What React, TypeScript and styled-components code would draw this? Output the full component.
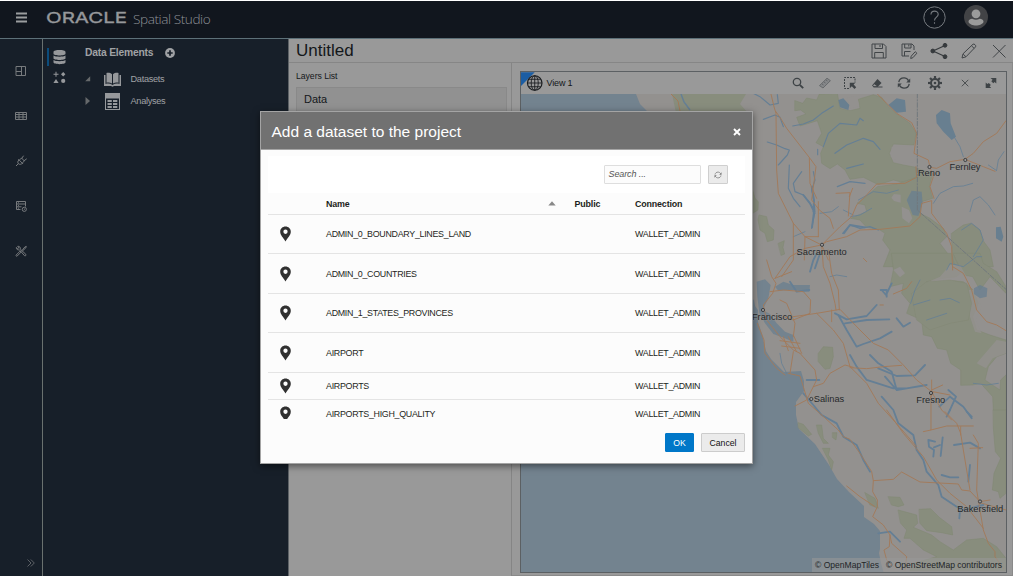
import React from "react";
import styled, { createGlobalStyle } from "styled-components";

const Global = createGlobalStyle`
  html, body { margin: 0; padding: 0; background: #fff; overflow: hidden; }
  * { box-sizing: border-box; }
  body { font-family: "Liberation Sans", Arial, sans-serif; color: #14171a; }
`;

const Page = styled.div`
  position: relative;
  width: 1014px;
  height: 576px;
  border-top: 1px solid #fff;
  border-right: 1px solid #fff;
  display: flex;
  flex-direction: column;
  overflow: hidden;
`;

const TopBar = styled.header`
  height: 38px;
  flex: none;
  display: flex;
  align-items: center;
  background: #11161e;
  border-bottom: 1px solid #5d7078;
  padding: 0 25px 5px 15px;
`;
const Brand = styled.div`
  display: flex;
  align-items: center;
  margin-left: 17px;
  flex: 1;
`;
const Product = styled.span`
  font: 300 13.6px/18px "Open Sans", sans-serif;
  letter-spacing: -0.43px;
  color: #8e9297;
  margin: 4px 0 0 5px;
  white-space: nowrap;
`;
const TopActions = styled.div`
  display: flex;
  align-items: center;
  gap: 18px;
`;

const Body = styled.div`
  display: flex;
  flex: 1;
  min-height: 0;
`;
const Rail = styled.nav`
  width: 43px;
  background: #171f29;
  border-right: 1px solid #6a716f;
  display: flex;
  flex-direction: column;
  align-items: center;
  padding: 25px 0 6px;
`;
const RailItem = styled.div<{ $last?: boolean }>`
  width: 14px;
  height: 14px;
  margin: ${(p) => (p.$last ? "auto 0 0 23px" : "0 0 31px 0")};
  display: flex;
`;
const Explorer = styled.aside`
  width: 246px;
  background: #171f29;
  border-right: 1px solid #5d6266;
  display: flex;
`;
const TabStrip = styled.div`
  width: 31px;
  padding: 9px 0 0 4px;
  display: flex;
  flex-direction: column;
  gap: 2px;
`;
const TabIcon = styled.div<{ $active?: boolean }>`
  height: 18px;
  border-left: 2px solid ${(p) => (p.$active ? "#0b4c7c" : "transparent")};
  padding-left: 4px;
  display: flex;
  align-items: center;
`;
const Tree = styled.div`
  padding: 6px 0 0 11px;
  color: #a0a2a5;
`;
const TreeTitle = styled.div`
  display: flex;
  align-items: center;
  gap: 12px;
  height: 15px;
  font-size: 10.3px;
  font-weight: bold;
  letter-spacing: -0.2px;
  margin-bottom: 8px;
`;
const TreeRow = styled.div`
  display: flex;
  align-items: center;
  height: 22px;
  font-size: 9.2px;
  letter-spacing: -0.3px;
`;
const Caret = styled.div`
  width: 19px;
  display: flex;
`;
const TreeIcon = styled.div`
  width: 26.5px;
  display: flex;
`;

const Main = styled.main`
  flex: 1;
  min-width: 0;
  background: #999;
  display: flex;
  flex-direction: column;
`;
const TitleBar = styled.div`
  height: 24px;
  flex: none;
  display: flex;
  align-items: center;
  border-bottom: 1px solid #868686;
  padding-left: 7px;
`;
const Title = styled.h1`
  flex: 1;
  margin: 0;
  font-size: 17px;
  font-weight: normal;
`;
const TitleAction = styled.div`
  width: 30px;
  height: 20px;
  display: flex;
  align-items: center;
  justify-content: center;
  &:last-child { width: 29px; }
`;
const Workspace = styled.div`
  flex: 1;
  display: flex;
  min-height: 0;
`;
const Layers = styled.section`
  width: 223px;
  flex: none;
  border-right: 1px solid #858585;
  padding: 7px 4px 0 7px;
`;
const LayersTitle = styled.div`
  font-size: 8.7px;
  letter-spacing: -0.05px;
  line-height: 12px;
`;
const LayerGroup = styled.div`
  margin-top: 5px;
  height: 32px;
  background: #919191;
  border: 1px solid #898989;
  font-size: 11px;
  line-height: 22px;
  padding-left: 7px;
`;
const ViewArea = styled.section`
  flex: 1;
  padding: 8px 5px 2px 8px;
  border-right: 1px solid #8a8a8a;
  border-bottom: 1px solid #8a8a8a;
  display: flex;
`;
const ViewFrame = styled.div`
  flex: 1;
  border: 1px solid #5c6063;
  display: flex;
  flex-direction: column;
`;
const ViewHeader = styled.div`
  height: 22px;
  flex: none;
  display: flex;
  align-items: center;
  padding-right: 8px;
`;
const ViewMark = styled.div`
  width: 25.5px;
  height: 22px;
  display: flex;
`;
const ViewName = styled.div`
  flex: 1;
  font-size: 9px;
  letter-spacing: -0.15px;
`;
const ToolCell = styled.div<{ $gap: number }>`
  width: 14px;
  height: 16px;
  margin-left: ${(p) => p.$gap}px;
  display: flex;
  align-items: center;
  justify-content: center;
`;
const MapBox = styled.div`
  flex: 1;
  min-height: 0;
  display: flex;
  position: relative;
  overflow: hidden;
`;
const Attribution = styled.div`
  position: absolute;
  right: 0;
  bottom: 0;
  height: 14px;
  padding: 0 4px 0 3px;
  display: flex;
  align-items: center;
  gap: 7px;
  background: rgba(153, 153, 153, 0.55);
  font-size: 8.55px;
  color: #222527;
  white-space: nowrap;
`;

const Dialog = styled.div`
  position: absolute;
  left: 260px;
  top: 110px;
  width: 493px;
  height: 353px;
  background: #fcfcfc;
  border: 1px solid #a4a4a4;
  box-shadow: 0 2px 7px rgba(0, 0, 0, 0.5);
  display: flex;
  flex-direction: column;
`;
const DialogHeader = styled.div`
  height: 38px;
  flex: none;
  display: flex;
  align-items: center;
  justify-content: space-between;
  background: #717171;
  border-bottom: 1px solid #a5a5a5;
  color: #fff;
  font-size: 15.5px;
  padding: 2px 11px 0 10.5px;
`;
const DialogBody = styled.div`
  flex: 1;
  padding: 6px 7px 0;
  min-height: 0;
`;
const Filter = styled.div`
  height: 37px;
  background: #fff;
  display: flex;
  justify-content: flex-end;
  align-items: center;
  gap: 7px;
  padding-right: 17.5px;
`;
const Search = styled.div`
  width: 97px;
  height: 19px;
  border: 1px solid #dedede;
  border-radius: 1px;
  background: #fcfcfc;
  color: #555;
  font-size: 9px;
  letter-spacing: -0.1px;
  font-style: italic;
  line-height: 17px;
  padding-left: 4px;
`;
const RefreshButton = styled.div`
  width: 20px;
  height: 19px;
  border: 1px solid #cfcfcf;
  border-radius: 1px;
  background: #ebebeb;
  display: flex;
  align-items: center;
  justify-content: center;
`;
const Row = styled.div<{ $h: number; $head?: boolean; $last?: boolean }>`
  height: ${(p) => p.$h}px;
  display: grid;
  grid-template-columns: 58px 248.5px 60.5px 1fr;
  align-items: center;
  border-bottom: ${(p) => (p.$last ? "0" : "1px solid #e4e4e4")};
  font-size: 8.9px;
  letter-spacing: ${(p) => (p.$head ? -0.15 : -0.29)}px;
  font-weight: ${(p) => (p.$head ? "bold" : "normal")};
  color: #1d1f21;
  overflow: hidden;
`;
const PinCell = styled.div<{ $cut?: boolean }>`
  padding-left: 11.500px;
  display: flex;
  height: ${(p) => (p.$cut ? 13 : 16)}px;
  margin-bottom: ${(p) => (p.$cut ? 2 : 0)}px;
  overflow: hidden;
`;
const NameHead = styled.div`
  display: flex;
  align-items: center;
  justify-content: space-between;
  padding-right: 19px;
`;
const Footer = styled.div`
  height: 39px;
  flex: none;
  display: flex;
  justify-content: flex-end;
  gap: 7px;
  padding: 9px 7px 0;
`;
const Button = styled.button<{ $primary?: boolean }>`
  height: 19px;
  width: ${(p) => (p.$primary ? 29 : 44)}px;
  padding: 0;
  border: 1px solid ${(p) => (p.$primary ? "#0077c8" : "#cccccc")};
  border-radius: 1px;
  background: ${(p) => (p.$primary ? "#0077c8" : "#ebebeb")};
  color: ${(p) => (p.$primary ? "#fff" : "#111")};
  font: 8.7px "Liberation Sans", Arial, sans-serif;
`;

const line = "#777a7d";

const Pin = () => (
  <svg width="11" height="16" viewBox="0 0 11 16">
    <path fillRule="evenodd" fill="#303030" d="M5.5.6C2.6.6.2 2.8.2 5.8c0 3.4 3 5.800 5.300 9.600 2.300-3.800 5.300-6.200 5.300-9.600C10.800 2.800 8.400.6 5.500.6Zm0 3a2.150 2.150 0 1 1 0 4.300 2.150 2.150 0 0 1 0-4.300Z" />
  </svg>
);

const Globe = () => (
  <svg width="26" height="22" viewBox="0 0 26 22">
    <path d="M0 0h14L0 14Z" fill="#1b5da3" />
    <g fill="none" stroke="#1a1d20" strokeWidth=".9">
      <circle cx="14" cy="11" r="7.400" fill="#999" strokeWidth="1.200" />
      <ellipse cx="14" cy="11" rx="3.600" ry="7.400" />
      <path d="M14 3.600v14.800M6.600 11h14.800M7.800 7.200h12.400M7.800 14.800h12.400" />
    </g>
  </svg>
);

const RefreshIcon = ({ size, color }: { size: number; color: string }) => (
  <svg width={size} height={size} viewBox="0 0 14 14" fill="none" stroke={color} strokeWidth="1.300">
    <path d="M1.800 6.200C2.200 3.500 4.400 1.900 7 1.900c2 0 3.600 1 4.500 2.700M12.200 7.800c-.4 2.700-2.600 4.300-5.200 4.300-2 0-3.600-1-4.500-2.700" />
    <path fill={color} stroke="none" d="M13.200 2.400v4H9.200ZM.8 11.600v-4h4Z" />
  </svg>
);

const gearTeeth = Array.from({ length: 8 }, (_, i) => i * 45);

const rail = [
  <svg width="14" height="14" viewBox="0 0 14 14" fill="none" stroke={line}>
    <path d="M2 2.500h9.500v9H2ZM7.500 2.500v9M2 7.500h5.500" />
  </svg>,
  <svg width="14" height="14" viewBox="0 0 14 14" fill="none" stroke={line}>
    <path d="M1.500 3.500h11v7h-11ZM1.500 5.500h11M1.500 8h11M5 3.500v7M9 3.500v7" />
  </svg>,
  <svg width="14" height="14" viewBox="0 0 14 14" fill="none" stroke={line}>
    <path d="M2 12l2.500-2.500M4.300 5.200l4.800 4.800M5 6c-1.500 1.300-1.500 2.800-.6 3.700s2.500.9 4-.4M5.500 6 7.200 4.200c1 .2 2.600 1.700 2.900 2.900L8.500 8.900M7.600 4.500l2-2.800M10 6.800l2.700-2" />
  </svg>,
  <svg width="14" height="14" viewBox="0 0 14 14" fill="none" stroke={line}>
    <path d="M6.500 10.500h-4v-8h9v5M2.500 5h9M2.500 7.800h5M4 3.800h1M4 6.400h1M4 9.200h1" />
    <circle cx="10.300" cy="10.300" r="2.100" />
    <path d="M10.300 9.300v1.200h.8" strokeWidth=".7" />
  </svg>,
  <svg width="14" height="14" viewBox="0 0 14 14" fill="none" stroke={line}>
    <path d="M2.200 11l4-4 1 1-4 4c-.8.600-1.700-.300-1-1ZM8 6.500l2.800-3.500 1.500-.6-.5 1.500L8.400 7M2.300 3.500c0 2 1.500 2.800 3 2.200l5.200 6c.8.600 2-.400 1.300-1.400L6.200 5c.5-1.500-.7-3-2.500-2.700l1 1.500-1 1Z" />
  </svg>,
];

const tools: { gap: number; icon: React.ReactNode }[] = [
  {
    gap: 0,
    icon: (
      <svg width="14" height="14" viewBox="0 0 14 14" fill="none" stroke="#3e4346">
        <circle cx="6" cy="6" r="3.700" strokeWidth="1.300" />
        <path d="M8.800 8.800l3.400 3.400" strokeWidth="1.900" />
      </svg>
    ),
  },
  {
    gap: 13,
    icon: (
      <svg width="14" height="14" viewBox="0 0 14 14" fill="#858789" stroke="#5c6062" strokeWidth=".8">
        <path d="M1.500 9.600 9 2.200l3.400 2.500L5 12Z" />
        <path d="M4 8l1.500 1M6 6l1.500 1M8 4l1.500 1" />
      </svg>
    ),
  },
  {
    gap: 11,
    icon: (
      <svg width="14" height="14" viewBox="0 0 14 14" fill="none" stroke="#3e4346">
        <path d="M6 12.500H1.500v-11h10.500v5" strokeDasharray="2 1" />
        <path fill="#3e4346" stroke="none" d="M6.800 6.800h5.500l-1.700 1.700 2.600 2.700-1.700 1.700L8.800 10.300l-2 2Z" />
      </svg>
    ),
  },
  {
    gap: 13,
    icon: (
      <svg width="14" height="14" viewBox="0 0 14 14" fill="#3e4346">
        <path d="M7.500 3l4 4-4 4H3.500L2 9.500Z" />
        <path d="M4.400 8.300 7 10.200H4L3 9.300Z" fill="#999" />
        <path d="M3.500 10.500h9v1h-9Z" />
      </svg>
    ),
  },
  { gap: 13, icon: <RefreshIcon size={14} color="#3e4346" /> },
  {
    gap: 17,
    icon: (
      <svg width="14" height="14" viewBox="0 0 14 14" fill="none" stroke="#3e4346">
        <circle cx="7" cy="7" r="4" strokeWidth="2" />
        <circle cx="7" cy="7" r="1.300" fill="#3e4346" stroke="none" />
        {gearTeeth.map((a) => (
          <path key={a} d="M7 0v2.800" strokeWidth="2.200" transform={`rotate(${a} 7 7)`} />
        ))}
      </svg>
    ),
  },
  {
    gap: 16,
    icon: (
      <svg width="14" height="14" viewBox="0 0 14 14" stroke="#4a4e50">
        <path d="M3.800 3.800l6.500 6.500M10.300 3.800l-6.500 6.500" />
      </svg>
    ),
  },
  {
    gap: 12,
    icon: (
      <svg width="14" height="14" viewBox="0 0 14 14" fill="#3e4346">
        <path d="M6.500 2h5.800v5.500L10.600 5.900 9.300 7.200 7.300 5.300l1.300-1.500ZM1.700 6.500l1.700 1.600L4.800 6.900 6.900 8.900 5.600 10.300 7.200 12H1.700Z" />
      </svg>
    ),
  },
];

const titleIcons = [
  <svg width="18" height="18" viewBox="0 0 18 18" fill="none" stroke="#414548" strokeWidth="1">
    <path d="M2 2h11.500L16 4.500V16H2ZM5 2v4.500h7.500V2M10 3v2M4.700 16v-5.500h8.600V16" />
  </svg>,
  <svg width="18" height="18" viewBox="0 0 18 18" fill="none" stroke="#414548" strokeWidth="1">
    <path d="M9 14H2V2h10l2 2v4M4.700 2v4h6.300V2M8.800 2.500v2M4.500 14V9.500h6M10.700 16.500l.5-2.300 4-4.500 1.700 1.500-4 4.500Z" />
  </svg>,
  <svg width="18" height="18" viewBox="0 0 18 18" fill="#363a3d" stroke="#363a3d">
    <path d="M15 3.500 3 9l12 5.500" fill="none" strokeWidth="1.200" />
    <circle cx="15" cy="3.300" r="1.900" />
    <circle cx="2.800" cy="9" r="1.900" />
    <circle cx="15" cy="14.700" r="1.900" />
  </svg>,
  <svg width="18" height="18" viewBox="0 0 18 18" fill="none" stroke="#414548" strokeWidth="1">
    <path d="M2 16l1-4.200L13 2.200c1-.8 3.500 1.200 2.600 2.600L6 14.800ZM11.500 3.800l2.700 2.600M3.200 12.200l2.700 2.500" />
  </svg>,
  <svg width="18" height="18" viewBox="0 0 18 18" stroke="#414548" strokeWidth="1">
    <path d="M3 3l12.500 12.500M15.500 3 3 15.500" />
  </svg>,
];

const cities = [
  { name: "Reno", x: 929, y: 176, cx: 929.5, cy: 167 },
  { name: "Fernley", x: 965, y: 169.500, cx: 965.3, cy: 160 },
  { name: "Sacramento", x: 821.600, y: 254.500, cx: 822, cy: 244.800 },
  { name: "San Francisco", x: 762.500, y: 319.500, cx: 763, cy: 310 },
  { name: "Salinas", x: 829, y: 402, cx: 811.300, cy: 399 },
  { name: "Fresno", x: 930.800, y: 403, cx: 931, cy: 393 },
  { name: "Bakersfield", x: 980.300, y: 511.500, cx: 980, cy: 501.500 },
];

const TerrainMap = () => (
  <svg width="485" height="478" viewBox="521 94 485 478">
    <rect x="521" y="94" width="485" height="478" fill="#93918f" />
    <path fill="#73838f" d="M521 94H636l4 10 9 9 20 60 60 110 25 17 4 22 4 12 4 17 5 8 13 13 17-1 3 10v10l-8 11v13l3 14 16 15 14 21 8 14 12 13 15 14v11l10 7 6 7v18l-1 4 2 10 5 18H521Z" />
    <path fill="#888d7d" d="M672 94h74l-6 10 8 9h-72Z" />
    <g transform="translate(750 90) scale(.33333)" strokeLinejoin="round" strokeLinecap="round">
      <g fill="#888d7d" stroke="#7f8771" strokeWidth="1.500">
        <path d="M135 32 158 40 170 24 200 30 208 12 262 10 270 55 300 62 330 55 325 28 370 14 395 22 415 50 440 72 480 100 498 128 492 165 430 162 418 190 430 218 460 225 498 232 500 258 470 280 430 270 385 284 340 262 300 268 285 240 262 222 240 236 215 220 212 190 220 170 198 158 215 130 202 92 150 108 140 82 168 72 152 60 135 62Z" />
        <path d="M350 318 382 290 440 282 500 262 500 235 548 250 538 290 548 325 515 335 510 370 540 385 580 415 590 440 570 460 600 500 600 530 400 530 420 480 398 450 405 430 390 420 350 412 330 390 302 385 350 365 345 345 322 340Z" />
        <path d="M605 430 640 405 662 400 690 420 698 450 720 480 730 530 608 530Z" />
        <path d="M28 375 50 380 55 405 72 420 70 450 52 455 45 430 30 420 24 390ZM8 300 15 325 25 335 24 360 8 370ZM85 460l18-8-4 20 5 20-10 4Z" />
        <path d="M425 490 605 490 612 520 640 540 620 560 580 565 530 575 540 600 520 630 560 610 590 570 640 575 670 600 685 640 668 680 680 720 720 735 768 750 768 790 740 800 715 830 705 870 735 890 750 900 752 870 768 855 768 980 730 960 728 920 692 880 668 885 632 886 632 840 602 820 590 780 562 775 545 740 520 735 515 690 470 670 480 640 455 610 460 580 420 590 430 540Z" />
        <path d="M205 790 220 770 248 772 250 800 240 835 225 838 205 815Z" />
        <path d="M610 490 690 490 700 520 740 545 768 590 768 610 720 560 690 600 668 560 640 555Z" />
        <path d="M730 960h38v250l-18 15-5-20-18-5 5-50 20-45-16-20-6-70Z" />
        <path d="M508 1258 542 1256 568 1282 605 1310 608 1335 575 1328 530 1322 510 1300Z" />
        <path d="M415 1220 450 1222 462 1245 445 1250 425 1245ZM345 1208 375 1225 385 1255 360 1245ZM445 1260 500 1275 503 1300 490 1312 545 1335 570 1355 610 1380 650 1350 700 1345 740 1370 768 1405 768 1442 480 1442 490 1420 560 1400 520 1380 480 1345 462 1345 470 1320 452 1300Z" />
        <path d="M145 998l15 5 25 30-10 5-30-25ZM200 1005l15 0 5 40 15 15-15 0-15-30ZM218 1075h22l-5 20 15 20-5 25-10-30ZM248 1028h13l-3 22-10-7Z" />
      </g>
      <g fill="#93918f">
        <path d="M432 312l20 2 0 24-20-5-8-10ZM455 350l22 10 10 25-10 15-20-15ZM425 170h60l10 45-45 5-28-20ZM290 25l30-8 8 30-24 10ZM430 540l20-10 15 20-15 12Z" />
        <path opacity=".8" d="M535 575l35-15 30-35 30 0 25 45 -40 0-40 10-30 20ZM655 600l20 0 20 50-18 40 18 40-20-5-15-45ZM680 820l60-70 28 5v35l-40 15-20 30Z" />
      </g>
      <path fill="#888d7d" stroke="#7f8771" d="M485 610 530 575 600 570 650 580 665 640 655 690 600 700 540 720 500 690Z" />
      <g fill="#687f90">
        <path d="M558 75 575 60 600 70 602 100 618 140 605 150 580 125 560 100ZM415 45 440 25 465 30 468 65 440 68ZM265 30 280 25 298 45 295 60 270 52ZM738 412 752 410 760 440 755 455 738 445Z" />
        <path opacity=".75" d="M470 330 485 302 515 305 518 340 505 378 488 375ZM672 595 690 585 712 595 710 620 690 625 672 612Z" />
        <path fill="#73838f" d="M20 575 45 568 62 585 55 625 38 660 60 672 80 700 105 725 130 735 130 755 105 745 70 732 45 700 28 668 22 620ZM75 590 100 575 130 585 180 585 178 605 120 600 85 602ZM8 640 24 660 24 700 8 710Z" />
      </g>
      <g fill="none" stroke="#657f95" strokeWidth="3.500">
        <path d="M10 10 30 20 60 45 85 40 82 14M40 88 75 75 90 82 100 110M52 156 80 165 105 176 118 180 112 195 85 225M128 108 160 102 190 90 215 70 250 48M220 170 235 130 270 100 320 105 330 85 340 92M255 190 290 165 340 145 370 155 390 178M290 235 340 222M203 178v16M185 415l10-50-15-25-20-25-25-10-5-25 25-35M190 245l5 25-10 30 8 40 2 30M118 225l-3 70 15 30 20 25M262 290 300 275 345 280M278 430 300 405 330 415 360 410 385 420" />
        <path strokeWidth="5.500" d="M186 412 192 365 180 340 160 315M185 290 192 330 190 365M282 430 300 405 345 412" />
        <path strokeWidth="5.500" d="M180 545 190 510 200 490M195 535 210 490M120 575 140 605 178 600M395 600 408 615 425 580M392 600h18v20M255 670 290 688 350 678 380 645M285 700 350 690 418 688M265 675 290 720 320 770 340 762 390 745 425 725M440 685 460 710 480 698M360 795 385 820 425 845 440 900M300 795 320 830 350 870 430 895 470 895 530 885M385 835 440 858 495 856 525 825M405 860 440 900 470 895M170 870h38M568 950 600 920 640 950 665 985M595 900 618 920 600 960" />
        <path d="M90 790 95 820 110 850M482 640 495 600 510 570M490 645 540 630M570 630 600 625 628 638M530 690 590 670M302 380 330 375 365 355M325 330 370 305 410 310 445 300M550 340 570 310 610 290 640 288 668 280M612 140 630 170 640 200M660 365 670 330 690 320 715 345 735 375M635 420 665 400 690 420 700 450 670 500M762 185 745 210 740 240M715 225 740 242M210 370 245 365 265 350M280 360 310 375M130 440 165 425M240 560 260 555 290 560M670 880 710 885 745 880M590 540 600 520 640 530 680 500 695 500" strokeWidth="2.500" />
        <path strokeWidth="5.500" d="M160 910 190 945 215 975 260 1000 280 1040 320 1065 340 1110 360 1145M395 920 430 960 445 1000 490 1035 500 1080 520 1110 530 1145 565 1185 575 1220 620 1250 640 1260 700 1245M535 1050 537 1070 552 1080 550 1100M552 1072 570 1065M578 1042 572 1098M535 1050 555 1055M612 1065 660 1058 690 1075M660 1125 655 1175M575 1155 600 1162 625 1162M630 1260 628 1285M385 1330 420 1325 450 1355M650 965 665 980M590 980 600 960" />
      </g>
      <g fill="none" stroke="#a27a59" strokeWidth="2.800">
        <path d="M62 8 72 50 78 70 80 240 85 310 130 400 165 440 215 465M78 65 95 90 110 115 180 205 198 230 185 330 208 360 240 385 250 415M178 205 180 280 200 325M205 335 205 440M380 10 410 40 440 70 485 98 500 130 492 190 535 210 540 232 560 235 600 215 645 208 670 190 700 155 740 130 768 92M645 208 700 230 735 244M498 230 500 262 465 280 380 282 350 315 320 345 305 380 270 410 240 440 215 465 230 455 290 440 330 420 390 418 480 408 510 380 515 340 545 332 545 370 590 430 605 470 608 540M540 232 550 260 540 290 552 325M258 310 300 308 295 378M298 320 308 295M130 400V510L95 560M165 440 163 510M165 440H205M215 465 220 530 240 580 255 640 258 660M215 465 165 475 120 500 75 565M235 480 245 550 265 600 268 660M215 465 235 510" />
        <path d="M608 530 640 550 665 600 680 660 710 695 740 705 768 722M50 510 65 560 78 580 68 610 40 645 50 690 90 740 130 780 150 790M75 565 125 545M60 605 100 600 160 605 182 630 180 670 130 690 100 680M90 630 110 640 135 700 130 740M130 680 200 670 270 658 330 720 370 760 415 780 460 825 500 870 545 905 575 960 605 990M200 670 250 720 280 760 300 830 350 880 385 940 430 990 500 1070M245 660v35M300 833 350 836 400 830 455 826M310 832 285 825 240 850 220 880 190 890 170 930 135 948M130 785 120 850M150 790 195 840 200 870 190 890M115 850 150 858 160 890 175 940 215 975M22 700 42 750 45 790 80 835 105 855M100 740 115 782M115 740 140 785M130 735 155 790M90 752 150 760M95 768 150 775M545 870V905M545 900 578 885M548 905 600 915M340 505 350 515M430 612 470 595 485 575M390 645H400" />
        <path d="M543 905 543 1020 520 1025M543 1020 590 1008 670 1008M585 965 620 1000 632 1030 640 1080 660 1200M632 1010V1035M670 1035 685 1060 680 1200 700 1320 715 1360 735 1385 735 1400 760 1435M660 1075 698 1073M410 960 460 1030 520 1100 560 1170 600 1210 650 1250 700 1315M215 975 265 1020 280 1040 300 1048 330 1090 365 1145 370 1172 430 1168 455 1146 510 1176 625 1182 635 1200 660 1203 690 1235M370 1172 368 1205 382 1230 382 1250 368 1280 400 1305 420 1335 425 1360 470 1400 465 1440M420 1335 418 1370 402 1380 410 1410 430 1430M290 1188 330 1220 375 1250M690 1235 720 1230M690 1238 768 1260M550 907 540 925" />
      </g>
      <path d="M502 10V360L768 598" fill="none" stroke="#70777c" strokeWidth="3" strokeDasharray="14 5 4 5" />
    </g>
    <path d="M671 94l7 7 2 10" fill="none" stroke="#a27a59" />
    <path d="M681 94l3 8 6 8" fill="none" stroke="#657f95" strokeWidth="1.500" />
    <g fontSize="9.300" textAnchor="middle" fill="#25282a" stroke="#979593" strokeWidth="1" strokeOpacity=".6" paintOrder="stroke">
      {cities.map((c) => (
        <text key={c.name} x={c.x} y={c.y}>
          {c.name}
        </text>
      ))}
    </g>
    <g fill="#999" stroke="#34383b" strokeWidth=".9">
      {cities.map((c) => (
        <circle key={c.name} cx={c.cx} cy={c.cy} r="1.600" />
      ))}
    </g>
  </svg>
);

const datasets = [
  { name: "ADMIN_0_BOUNDARY_LINES_LAND", h: 39 },
  { name: "ADMIN_0_COUNTRIES", h: 40 },
  { name: "ADMIN_1_STATES_PROVINCES", h: 39 },
  { name: "AIRPORT", h: 40 },
  { name: "AIRPORTS", h: 27 },
  { name: "AIRPORTS_HIGH_QUALITY", h: 27 },
];

export default function App() {
  return (
    <Page>
      <Global />
      <TopBar>
        <svg width="13" height="13" viewBox="0 0 13 13" fill="#9b9d9f">
          <path d="M1 1.500h11v2H1ZM1 5.500h11v2H1ZM1 9.500h11v2H1Z" />
        </svg>
        <Brand>
          <svg width="83" height="20" viewBox="0 0 83 20">
            <text x="1" y="15.500" fontFamily="Inter, sans-serif" fontWeight="400" fontSize="14.800" fill="#96989b" stroke="#96989b" strokeWidth=".35" textLength="81" lengthAdjust="spacingAndGlyphs">
              ORACLE
            </text>
          </svg>
          <Product>Spatial Studio</Product>
        </Brand>
        <TopActions>
          <svg width="23" height="23" viewBox="0 0 23 23" fill="none" stroke="#777b80">
            <circle cx="11.500" cy="11.500" r="10.700" />
            <path d="M8 8.500c0-4.500 7.200-4.400 7.200-.2 0 3-3.700 2.700-3.700 6.200M11.500 16.200v1.600" strokeWidth="1.100" />
          </svg>
          <svg width="24" height="24" viewBox="0 0 24 24" fill="#9b9b9b">
            <circle cx="12" cy="12" r="12" fill="#424346" />
            <circle cx="12" cy="8.800" r="4.400" />
            <path d="M4.500 16.500c0-2.300 3.300-3 4.200-2.600 2 1 4.600 1 6.600 0 .900-.400 4.200.300 4.200 2.600 0 2.500-4.500 4-7.500 4s-7.500-1.500-7.500-4Z" />
          </svg>
        </TopActions>
      </TopBar>
      <Body>
        <Rail>
          {rail.map((icon, i) => (
            <RailItem key={i}>{icon}</RailItem>
          ))}
          <RailItem $last>
            <svg width="10" height="14" viewBox="0 0 10 14" fill="none" stroke="#5d6166">
              <path d="M1.500 3.500 5 7l-3.500 3.500M4.800 3.500 8.300 7l-3.500 3.500" />
            </svg>
          </RailItem>
        </Rail>
        <Explorer>
          <TabStrip>
            <TabIcon $active>
              <svg width="13" height="16" viewBox="0 0 13 16" fill="#96989b">
                <path d="M.5 3C.5.400 12.500.400 12.500 3v1.700c0 2.300-12 2.300-12 0ZM.5 6.500c2 1.600 10 1.600 12 0v2.700c0 2.300-12 2.300-12 0ZM.5 11c2 1.600 10 1.600 12 0v2.300c0 2.500-12 2.500-12 0Z" />
              </svg>
            </TabIcon>
            <TabIcon>
              <svg width="13" height="13" viewBox="0 0 13 13" fill="#96989b">
                <path d="M2.500.7h1v2h2v1h-2v2h-1v-2h-2v-1h2ZM10.200 1l2.200 2.200-2.200 2.200L8 3.200ZM3 8l2.600 4H.4Z" />
                <circle cx="10.200" cy="9.900" r="2.100" />
              </svg>
            </TabIcon>
          </TabStrip>
          <Tree>
            <TreeTitle>
              Data Elements
              <svg width="10" height="10" viewBox="0 0 10 10">
                <circle cx="5" cy="5" r="4.900" fill="#a0a2a5" />
                <path d="M5 2.300v5.400M2.300 5h5.400" stroke="#171f29" strokeWidth="1.700" />
              </svg>
            </TreeTitle>
            <TreeRow>
              <Caret>
                <svg width="6" height="6" viewBox="0 0 6 6">
                  <path d="M5.200.3v5H.2Z" fill="#66696b" />
                </svg>
              </Caret>
              <TreeIcon>
                <svg width="17" height="15" viewBox="0 0 17 15">
                  <path fill="#96989b" d="M0 3h1.500v9c2.500-.8 4.800-.5 7 1 2.200-1.500 4.500-1.800 7-1V3H17v11h-7l-1.500.8L7 14H0ZM2.500 1c2.200-.4 4 .1 5.500 1.200v9.300C6.300 10.500 4.500 10.300 2.500 10.700ZM14.500 1c-2.200-.4-4 .1-5.500 1.200v9.300c1.700-1 3.500-1.200 5.500-.8Z" />
                </svg>
              </TreeIcon>
              Datasets
            </TreeRow>
            <TreeRow>
              <Caret>
                <svg width="6" height="8" viewBox="0 0 6 8">
                  <path d="M.5 0 5 4 .5 8Z" fill="#66696b" />
                </svg>
              </Caret>
              <TreeIcon>
                <svg width="17" height="17" viewBox="0 0 17 17">
                  <rect x="1" y="0" width="15" height="17" fill="#96989b" />
                  <path d="M2 5.500h13V16H2Z" fill="#171f29" />
                  <path d="M3.500 7h4.300v2H3.500ZM9 7h4.300v2H9ZM3.500 10h4.300v2H3.500ZM9 10h4.300v2H9ZM3.500 13h4.300v2H3.500ZM9 13h4.300v2H9Z" fill="#96989b" />
                </svg>
              </TreeIcon>
              Analyses
            </TreeRow>
          </Tree>
        </Explorer>
        <Main>
          <TitleBar>
            <Title>Untitled</Title>
            {titleIcons.map((icon, i) => (
              <TitleAction key={i}>{icon}</TitleAction>
            ))}
          </TitleBar>
          <Workspace>
            <Layers>
              <LayersTitle>Layers List</LayersTitle>
              <LayerGroup>Data</LayerGroup>
            </Layers>
            <ViewArea>
              <ViewFrame>
                <ViewHeader>
                  <ViewMark>
                    <Globe />
                  </ViewMark>
                  <ViewName>View 1</ViewName>
                  {tools.map((t, i) => (
                    <ToolCell key={i} $gap={t.gap}>
                      {t.icon}
                    </ToolCell>
                  ))}
                </ViewHeader>
                <MapBox>
                  <TerrainMap />
                  <Attribution>
                    <span>© OpenMapTiles</span>
                    <span>© OpenStreetMap contributors</span>
                  </Attribution>
                </MapBox>
              </ViewFrame>
            </ViewArea>
          </Workspace>
        </Main>
      </Body>
      <Dialog>
        <DialogHeader>
          <span>Add a dataset to the project</span>
          <svg width="8" height="8" viewBox="0 0 8 8" stroke="#fff" strokeWidth="1.900">
            <path d="M1 1l6 6M7 1 1 7" />
          </svg>
        </DialogHeader>
        <DialogBody>
          <Filter>
            <Search>Search ...</Search>
            <RefreshButton>
              <RefreshIcon size={8} color="#777" />
            </RefreshButton>
          </Filter>
          <Row $h={22} $head>
            <span />
            <NameHead>
              Name
              <svg width="8" height="5" viewBox="0 0 8 5">
                <path d="M4 .3 7.700 4.600H.3Z" fill="#888" />
              </svg>
            </NameHead>
            <span>Public</span>
            <span>Connection</span>
          </Row>
          {datasets.map((d, i) => (
            <Row key={d.name} $h={d.h} $last={i === datasets.length - 1}>
              <PinCell $cut={i === datasets.length - 1}>
                <Pin />
              </PinCell>
              <span>{d.name}</span>
              <span />
              <span>WALLET_ADMIN</span>
            </Row>
          ))}
        </DialogBody>
        <Footer>
          <Button $primary>OK</Button>
          <Button>Cancel</Button>
        </Footer>
      </Dialog>
    </Page>
  );
}
